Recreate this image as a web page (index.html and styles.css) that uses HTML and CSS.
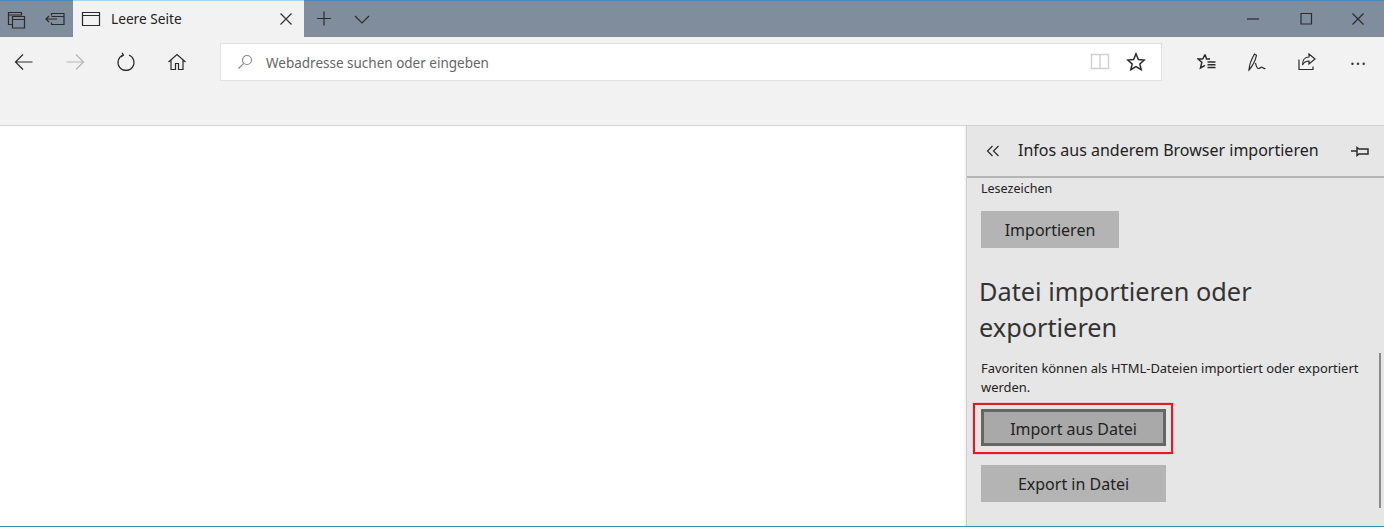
FILE: index.html
```html
<!DOCTYPE html>
<html lang="de">
<head>
<meta charset="utf-8">
<title>Leere Seite</title>
<link rel="stylesheet" href="styles.css">
</head>
<body>
<div class="browser">
  <header class="titlebar">
    <div class="tab-tools">
      <svg class="ic" width="19" height="19" viewBox="0 0 19 19"><path d="M5 14.500h-3.500v-12h13v3M1.500 5h13"/><path d="M5.500 6.500h12v11.500h-12zM5.500 9.500h12"/></svg>
      <svg class="ic" width="20" height="14" viewBox="0 0 20 14"><path d="M6.500 3.500v-2h12.500v11h-12.500v-2M6.500 4.500h12.500M1 7h11M4 4l-3 3 3 3"/></svg>
    </div>
    <div class="tab">
      <svg class="ic" width="20" height="16" viewBox="0 0 20 16"><path d="M1.500 1.500h17v13h-17zM1.500 4.500h17"/></svg>
      <span class="tab-title">Leere Seite</span>
      <svg class="ic tab-close" width="14" height="14" viewBox="0 0 14 14"><path d="M1.500 1.500l11 11M12.500 1.500l-11 11"/></svg>
    </div>
    <div class="tab-actions">
      <svg class="ic" width="18" height="18" viewBox="0 0 18 18"><path d="M9 1.500v14M2 8.500h14"/></svg>
      <svg class="ic" width="18" height="18" viewBox="0 0 18 18"><path d="M2 6l7 7 7-7"/></svg>
    </div>
    <div class="window-controls">
      <svg class="ic" width="14" height="14" viewBox="0 0 14 14"><path d="M1 7h12"/></svg>
      <svg class="ic" width="14" height="14" viewBox="0 0 14 14"><path d="M2 1.500h10.500v10.500h-10.500z"/></svg>
      <svg class="ic" width="14" height="14" viewBox="0 0 14 14"><path d="M1.500 1.500l11 11M12.500 1.500l-11 11"/></svg>
    </div>
  </header>

  <nav class="toolbar">
    <div class="nav-buttons">
      <svg class="ic" width="20" height="20" viewBox="0 0 20 20"><path d="M18.500 10h-17M9 2.500l-7.500 7.500 7.500 7.500"/></svg>
      <svg class="ic ic-dim" width="20" height="20" viewBox="0 0 20 20"><path d="M1.500 10h17M11 2.500l7.500 7.500-7.500 7.500"/></svg>
      <svg class="ic" width="20" height="20" viewBox="0 0 20 20"><path d="M13 3a8 8 0 1 1-6 0M6 .8l1.500 2.400-2.500 1.800"/></svg>
      <svg class="ic" width="20" height="20" viewBox="0 0 20 20"><path d="M1.500 10l8.500-7.500 8.500 7.500M4 8v9.500h4.500v-6h3v6h4.500v-9.500"/></svg>
    </div>
    <div class="addressbar">
      <svg class="ic ic-gray" width="16" height="16" viewBox="0 0 16 16"><circle cx="10" cy="6" r="4.500"/><path d="M6.700 9.300l-5.200 5.200"/></svg>
      <span class="address-text">Webadresse suchen oder eingeben</span>
      <svg class="ic ic-faint" width="20" height="18" viewBox="0 0 20 18"><path d="M1.500 1.500h7.500l1 1 1-1h7.500v14h-17zM10 2.500v13"/></svg>
      <svg class="ic ic-star" width="20" height="20" viewBox="0 0 20 20"><path d="M10 2l2.400 5.500 5.800.5-4.400 3.900 1.400 5.800-5.200-3.100-5.200 3.100 1.400-5.800-4.400-3.900 5.800-.5z"/></svg>
    </div>
    <div class="tool-buttons">
      <svg class="ic ic-star" width="20" height="20" viewBox="0 0 20 20"><path d="M8 2.500l1.600 4.500h3.400M5.800 7h-4.800l3.800 3.300-1.300 5.700 4.500-2.700M8 2.500l-2.200 4.500M10.500 10h8M10.500 12.800h8M10.500 15.600h8"/></svg>
      <svg class="ic" width="20" height="20" viewBox="0 0 20 20"><path d="M2 18c.2-4 2-10 5.500-16l2 1.200c-1 5-3.500 10.500-7.500 14.800zM8.500 11c.8 3 1.200 5.500 3 5.500s2-1.800 3.500-1.300 1.500 1.800 3.500 1.300"/></svg>
      <svg class="ic" width="20" height="20" viewBox="0 0 20 20"><path d="M2 7.500v10h14v-3M12 2l6 5-6 5v-3c-3 0-5 1-6.500 4 0-5 2.500-8 6.500-8z"/></svg>
      <span class="more">···</span>
    </div>
  </nav>

  <div class="favbar"></div>

  <main class="content">
    <div class="page"></div>
    <aside class="panel">
      <div class="panel-head">
        <svg class="ic" width="14" height="12" viewBox="0 0 14 12"><path d="M6.500 1l-5 5 5 5M12.500 1l-5 5 5 5"/></svg>
        <h1 class="panel-title">Infos aus anderem Browser importieren</h1>
        <svg class="ic ic-star" width="20" height="14" viewBox="0 0 20 14"><path d="M1 7h6M7 3.500l2 1.500h9v5h-9l-2 1.500z"/></svg>
      </div>
      <div class="panel-body">
        <p class="label">Lesezeichen</p>
        <button class="btn btn-short">Importieren</button>
        <h2 class="heading">Datei importieren oder exportieren</h2>
        <p class="label desc">Favoriten können als HTML-Dateien importiert oder exportiert werden.</p>
        <div class="highlight">
          <button class="btn btn-wide btn-focus">Import aus Datei</button>
        </div>
        <button class="btn btn-wide">Export in Datei</button>
      </div>
      <div class="scrollbar"></div>
    </aside>
  </main>
</div>
</body>
</html>
```

FILE: styles.css
```css
* { box-sizing: border-box; }
html, body { margin: 0; padding: 0; height: 100%; overflow: hidden; }
body { font-family: "Noto Sans", "Open Sans", sans-serif; color: #222; background: #fff; }

.browser { display: flex; flex-direction: column; width: 1384px; height: 527px; border-bottom: 1px solid #3f8fb0; }

.ic { display: block; flex: none; fill: none; stroke: #2b2b2b; stroke-width: 1.2; }
.ic-dim { stroke: #b5b5b5; }
.ic-gray { stroke: #8a8a8a; }
.ic-faint { stroke: #cfcfcf; stroke-width: 1.4; }
.ic-star { stroke-width: 1.5; }

.titlebar { display: flex; align-items: stretch; height: 37px; background: #808d9d; border-top: 1px solid #4f86b5; flex: none; }
.tab-tools { display: flex; align-items: center; gap: 19px; width: 73px; padding-left: 7px; }
.tab { display: flex; align-items: center; width: 231px; background: #f2f2f2; border-top: 1px solid #a9d3ea; padding-left: 8px; padding-right: 11px; margin-top: -1px; }
.tab-title { flex: 1; font-size: 13.700px; margin: -2px 0 0 10px; color: #222; }
.tab-close { stroke: #333; }
.tab-actions { display: flex; align-items: center; gap: 20px; padding-left: 11px; }
.window-controls { display: flex; align-items: center; gap: 38.500px; margin-left: auto; padding-right: 19px; }

.toolbar { display: flex; align-items: center; height: 50px; background: #f2f2f2; flex: none; }
.nav-buttons { display: flex; align-items: center; gap: 31px; width: 220px; padding-left: 14px; }
.addressbar { display: flex; align-items: center; width: 942px; height: 38px; background: #fff; border: 1px solid #e2e2e2; padding-left: 16px; padding-right: 15px; }
.address-text { flex: 1; font-size: 13.500px; color: #666; margin: 1px 0 0 13px; }
.addressbar .ic-faint { margin-right: 16px; }
.tool-buttons { display: flex; align-items: center; gap: 30px; padding-left: 35px; }
.more { font-size: 18px; line-height: 20px; font-weight: 400; color: #333; letter-spacing: .8px; margin: 2px 0 0 3px; }

.favbar { height: 39px; background: #f2f2f2; border-bottom: 1px solid #d6d6d6; flex: none; }

.content { display: flex; flex: 1; min-height: 0; }
.page { flex: 1; background: #fff; }
.panel { position: relative; width: 418px; background: #e6e6e6; border-left: 1px solid #cdcdcd; box-shadow: -1px 0 2px rgba(0,0,0,.08); }
.panel-head { display: flex; align-items: center; height: 52px; border-bottom: 2px solid #b4b4b4; padding-left: 19px; padding-right: 14px; }
.panel-title { flex: 1; margin: -2px 0 0 18px; font-size: 16px; font-weight: 400; color: #222; white-space: nowrap; }
.panel-body { display: flex; flex-direction: column; align-items: flex-start; padding: 1px 14px 0 14px; }

.label { margin: 0; font-size: 12.500px; line-height: 19px; color: #222; }
.heading { margin: 25px 0 0 -2px; font-size: 25.300px; line-height: 36px; font-weight: 400; color: #333; width: 340px; }
.desc { margin-top: 14px; width: 395px; font-size: 12.950px; }

.btn { display: block; border: 0; background: #b4b4b4; color: #222; font-family: inherit; font-size: 16px; padding: 0; height: 37px; }
.btn-short { width: 138px; margin-top: 13px; }
.btn-wide { width: 185px; }
.btn-focus { background: #a9a9a9; border: 3px solid #666; padding-top: 2px; }
.highlight { margin: 6px 0 0 -8px; padding: 4px 6px; border: 2px solid #e01b24; box-shadow: 0 0 1px rgba(224,27,36,.7); width: 200px; height: 51px; }
.highlight + .btn { margin-top: 11px; }

.scrollbar { position: absolute; right: 3px; top: 227px; width: 2px; height: 155px; background: #8a8a8a; }
```
